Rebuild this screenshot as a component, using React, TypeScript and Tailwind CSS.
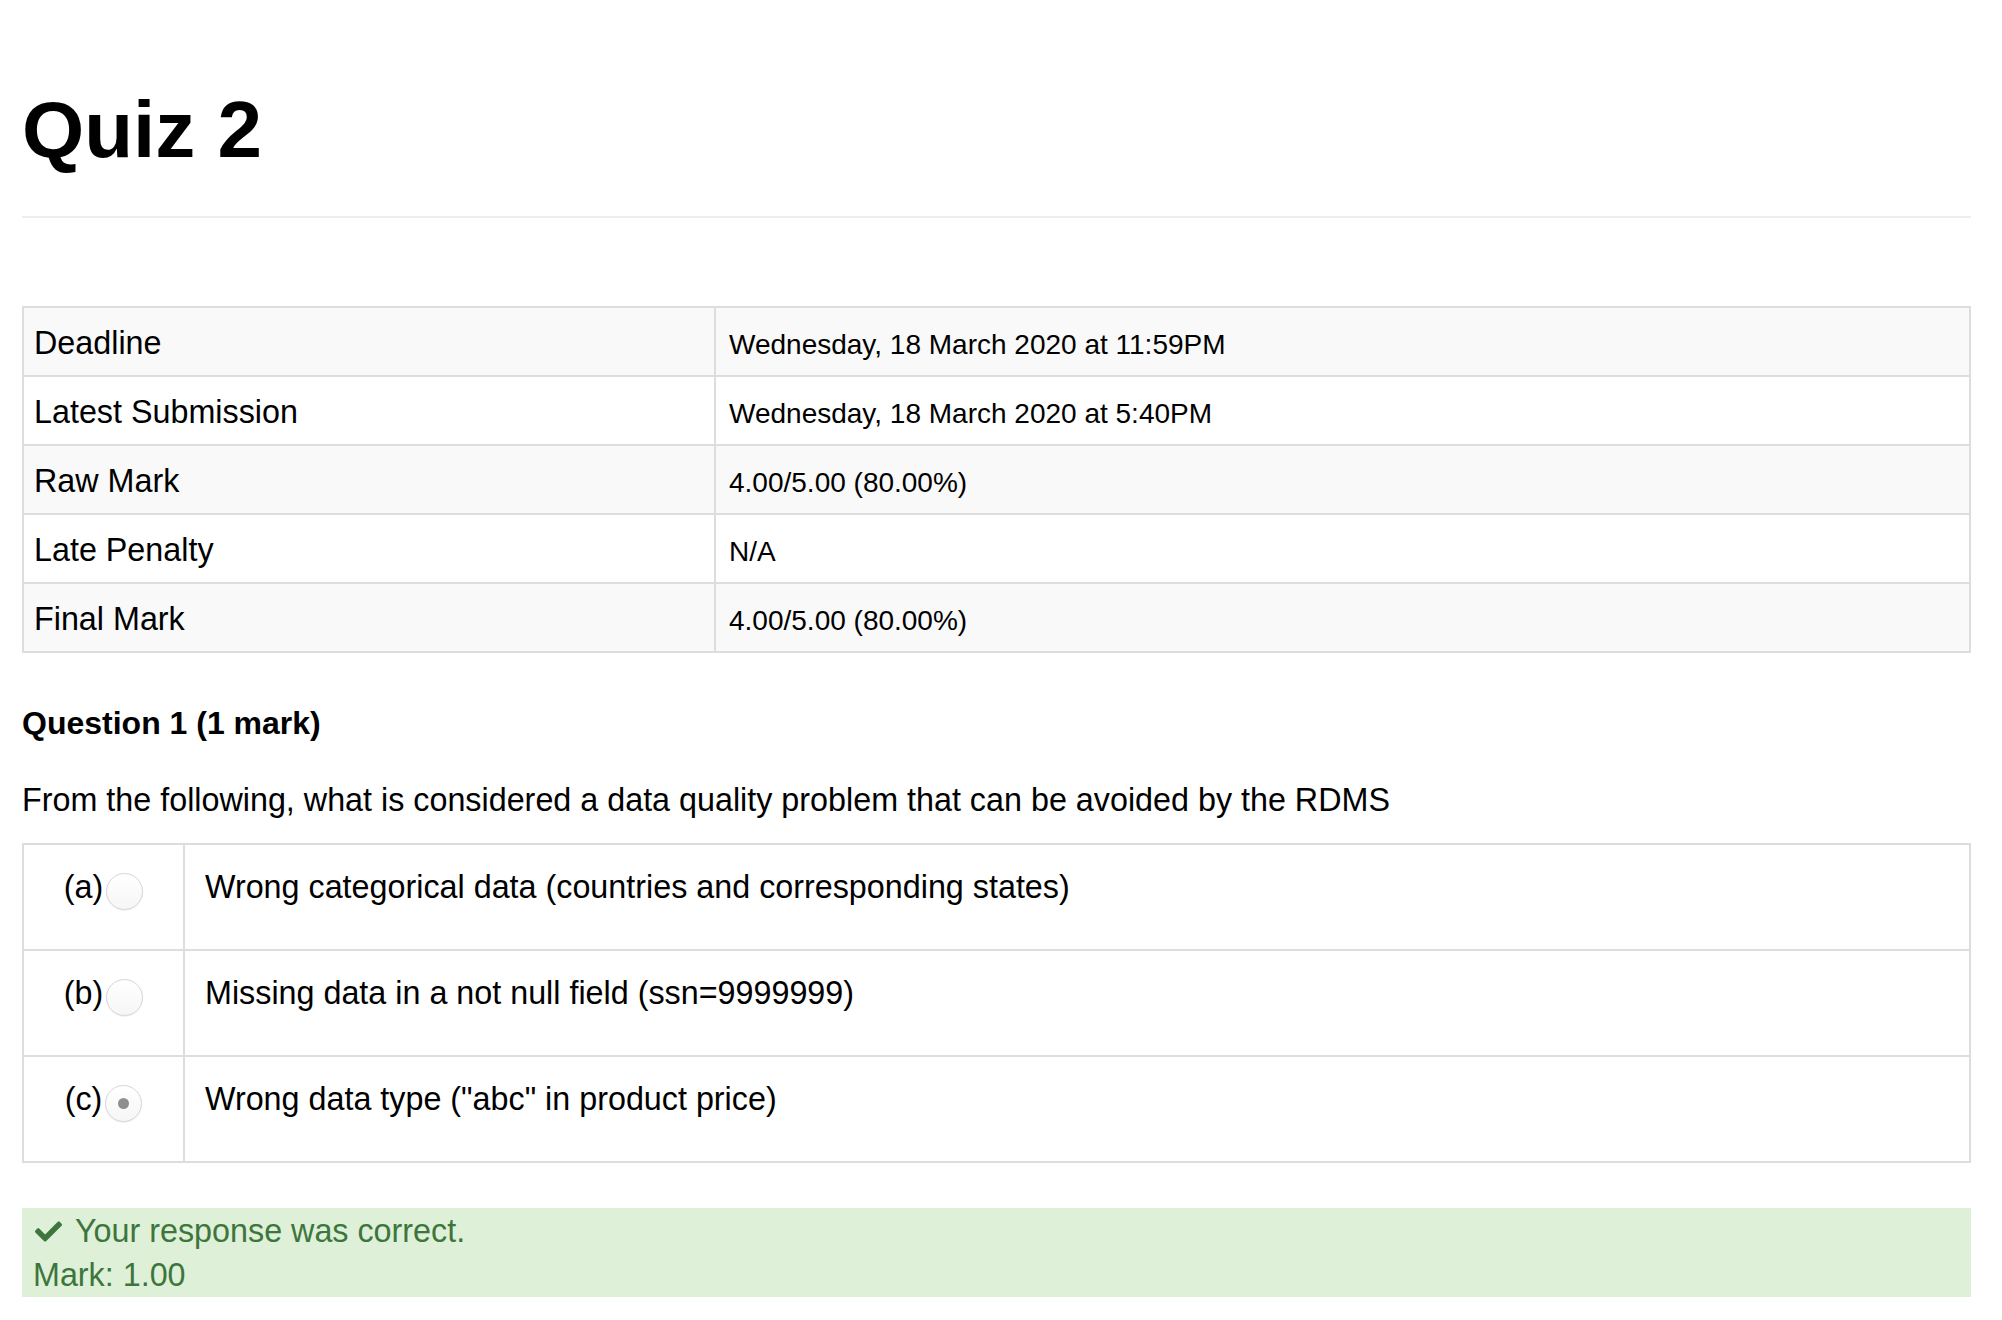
import { FaCheck } from "react-icons/fa";

const summary = [
  ["Deadline", "Wednesday, 18 March 2020 at 11:59PM"],
  ["Latest Submission", "Wednesday, 18 March 2020 at 5:40PM"],
  ["Raw Mark", "4.00/5.00 (80.00%)"],
  ["Late Penalty", "N/A"],
  ["Final Mark", "4.00/5.00 (80.00%)"],
];

const options = [
  { key: "a", text: "Wrong categorical data (countries and corresponding states)", checked: false },
  { key: "b", text: "Missing data in a not null field (ssn=9999999)", checked: false },
  { key: "c", text: 'Wrong data type ("abc" in product price)', checked: true },
];

function Radio({ checked }: { checked: boolean }) {
  return (
    <span className="mt-[8px] flex h-[37px] w-[37px] shrink-0 items-center justify-center rounded-full border border-[#d6d6d6] bg-linear-to-b from-white to-[#f6f6f6] shadow-[0_1px_1px_rgba(0,0,0,0.06)]">
      {checked && <span className="h-[11px] w-[11px] rounded-full bg-[#8f8f8f]" />}
    </span>
  );
}

export default function App() {
  return (
    <div className="min-h-screen bg-white font-['Liberation_Sans',Arial,sans-serif] text-black">
      <div className="ml-[22px] w-[1949px] pt-[86px]">
        <div className="border-b-2 border-[#eeeeee] pb-[42px]">
          <h1 className="text-[80px] font-bold leading-[88px]">Quiz 2</h1>
        </div>

        <div className="mt-[88px] border-2 border-[#dddddd]">
          {summary.map(([label, value], i) => (
            <div
              key={label}
              className={`flex ${i > 0 ? "border-t-2 border-[#dddddd]" : ""} ${i % 2 === 0 ? "bg-[#f9f9f9]" : "bg-white"}`}
            >
              <div className="w-[690px] shrink-0 px-[10px] pb-[9px] pt-[13px] text-[32.3px] leading-[45px]">{label}</div>
              <div className="flex-1 border-l-2 border-[#dddddd] pl-[13px] pt-[14px] text-[28px] leading-[45px]">
                {value}
              </div>
            </div>
          ))}
        </div>

        <h4 className="mt-[48px] text-[32px] font-bold leading-[45.7px]">Question 1 (1 mark)</h4>
        <p className="mt-[31px] text-[32.3px] leading-[45.7px]">
          From the following, what is considered a data quality problem that can be avoided by the RDMS
        </p>

        <div className="mt-[20px] border-2 border-[#dddddd]">
          {options.map((o, i) => (
            <div key={o.key} className={`flex h-[104px] ${i > 0 ? "h-[106px] border-t-2 border-[#dddddd]" : ""}`}>
              <div className="flex w-[159px] shrink-0 items-start justify-center gap-[3px] pt-[20px]">
                <span className="text-[32.3px] leading-[45.7px]">({o.key})</span>
                <Radio checked={o.checked} />
              </div>
              <div className="flex-1 border-l-2 border-[#dddddd] pl-[20px] pt-[20px] text-[32.3px] leading-[45.7px]">
                {o.text}
              </div>
            </div>
          ))}
        </div>

        <div className="mt-[45px] bg-[#dff0d8] pl-[11px] pt-[1px] text-[32.3px] leading-[44px] text-[#3c763d]">
          <div className="flex items-center">
            <FaCheck className="mr-[11px] h-[27px] w-[31px]" />
            <span>Your response was correct.</span>
          </div>
          <div>Mark: 1.00</div>
        </div>
      </div>
    </div>
  );
}
